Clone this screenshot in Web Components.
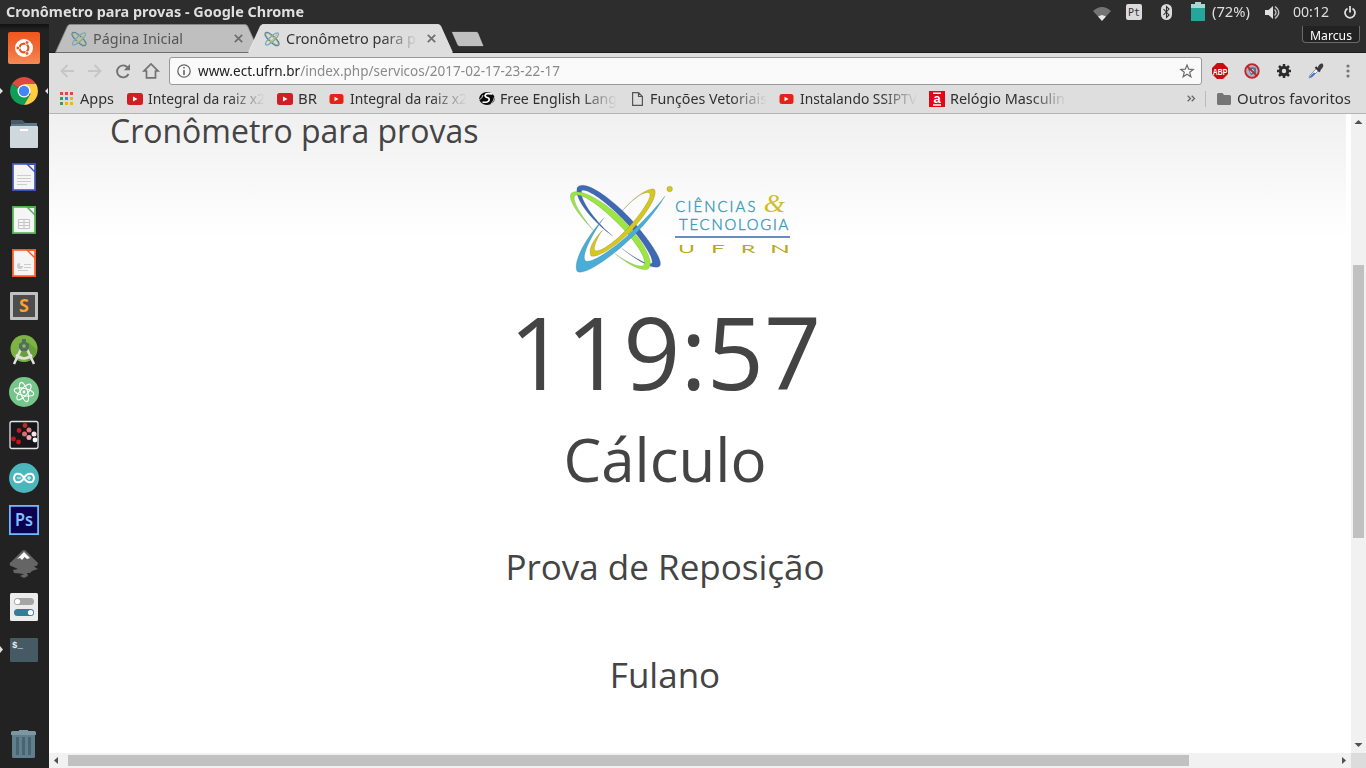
<!DOCTYPE html>
<html lang="pt-BR">
<head>
<meta charset="utf-8">
<title>Cronômetro para provas - Google Chrome</title>
<style>
html,body{margin:0;height:100%;overflow:hidden;background:#2d2d2d}
body{font-family:"Noto Sans","Open Sans",sans-serif}
</style>
</head>
<body>
<desk-top></desk-top>
<script>
const ICONS = {
  wifi: '<path d="M0 5Q9-3 18 5L13 10.500Q9 8 5 10.500Z" fill="#747474"/><path d="M5 10.500Q9 7.500 13 10.500L9 15Z" fill="#e8e8e8"/>',
  bt: '<rect width="11" height="16" rx="5.500" fill="#dbdbdb"/><path d="M2.500 5L8 11L5.500 13.500V2.500L8 5L2.500 11" fill="none" stroke="#2d2d2d" stroke-width="1.100"/>',
  battery: '<path d="M4 0h6v2h4v17H0V2h4Z" fill="#a7d8d4"/><path d="M0 6h14v13H0Z" fill="#26a69a"/>',
  sound: '<path d="M0 5h3.500L8 1v13L3.500 10H0Z" fill="#dfdfdf"/><path d="M9.500 4.500q3 3 0 6M10 1.500q7.500 6 0 12" fill="none" stroke="#bcbcbc" stroke-width="1.400"/>',
  power: '<path d="M3.500 2.500a5 5 0 1 0 5 0M6 0v6.500" fill="none" stroke="#dfdfdf" stroke-width="1.800"/>',
  fav: '<g fill="none"><ellipse cx="8" cy="8" rx="9" ry="3" transform="rotate(43 8 8)" stroke="#5d7f9a" stroke-width="1.300"/><ellipse cx="8" cy="8" rx="8" ry="2" transform="rotate(43 8 8)" stroke="#a6bd8c" stroke-width="1"/><ellipse cx="8" cy="8" rx="8.500" ry="2.400" transform="rotate(-43 8 8)" stroke="#76a9bd" stroke-width="1.300"/><path d="M5 11Q10 9 13 3" stroke="#cdc35c" stroke-width="1.200"/></g>',
  close: '<path d="M.8.800L8.200 8.200M8.200.800L.8 8.200" stroke="#6e6e6e" stroke-width="1.700"/>',
  back: '<path d="M14 7H1.500M7.500 1L1.500 7L7.500 13" fill="none" stroke="#c6c6c6" stroke-width="1.800"/>',
  fwd: '<path d="M0 7H12.500M6.500 1L12.500 7L6.500 13" fill="none" stroke="#c6c6c6" stroke-width="1.800"/>',
  reload: '<path d="M12.500 10A6 6 0 1 1 11.500 3.300" fill="none" stroke="#727272" stroke-width="1.900"/><path d="M14 0V6.200H7.800Z" fill="#727272"/>',
  home: '<path d="M3.500 8V14.800H12.500V8H15L8 1L1 8Z" fill="none" stroke="#727272" stroke-width="1.700"/>',
  info: '<circle cx="7" cy="7" r="6.200" fill="none" stroke="#666" stroke-width="1.300"/><path d="M7 6v5M7 3v1.600" stroke="#666" stroke-width="1.600"/>',
  star: '<path d="M7 1L8.700 5.200L13.200 5.500L9.700 8.300L10.900 12.800L7 10.300L3.100 12.800L4.300 8.300L.8 5.500L5.300 5.200Z" fill="none" stroke="#6b6b6b" stroke-width="1.200"/>',
  abp: '<path d="M5 0h6l5 5v6l-5 5H5L0 11V5Z" fill="#c90c0f"/><text x="8" y="11.500" text-anchor="middle" textLength="14.500" lengthAdjust="spacingAndGlyphs" font-family="Liberation Sans" font-weight="700" font-size="9.500" fill="#fff">ABP</text>',
  block: '<circle cx="8" cy="8" r="5.500" fill="#a9b4c5"/><path d="M4 6l3 6 5-2V5L8 4Z" fill="#4c78a8"/><circle cx="8" cy="8" r="2" fill="#d5e4f0"/><circle cx="8" cy="8" r="6.700" fill="none" stroke="#c2262c" stroke-width="2"/><path d="M3.500 3.500L12.500 12.500" stroke="#c2262c" stroke-width="2"/>',
  gear: '<circle cx="7" cy="7" r="3.700" fill="none" stroke="#2b2b2b" stroke-width="3"/><path d="M7 0v3M7 11v3M0 7h3M11 7h3M2 2l2 2M10 10l2 2M12 2l-2 2M4 10l-2 2" stroke="#2b2b2b" stroke-width="2.500"/>',
  picker: '<path d="M1 15L2 12L9 5L11 7L4 14Z" fill="#f1f4f7" stroke="#7e8791" stroke-width=".8"/><path d="M1.500 14.500L3 12L6 9.500L7.500 10.500L4 14Z" fill="#4472e0"/><path d="M7.500 4L12 8.500" stroke="#303030" stroke-width="2.200"/><path d="M9.500 5.500Q11 0 14.500 .5Q17 3 12 7.500Z" fill="#3c3c42"/>',
  menu: '<g fill="#777"><circle cx="2" cy="2" r="1.600"/><circle cx="2" cy="7" r="1.600"/><circle cx="2" cy="12" r="1.600"/></g>',
  apps: '<path d="M0 0h3v3H0Zm5 0h3v3H5Zm5 0h3v3h-3Z" fill="#ef4136"/><path d="M0 5h3v3H0ZM0 10h3v3H0Z" fill="#2ba35a"/><path d="M5 5h3v3H5Z" fill="#2f8de4"/><path d="M10 5h3v3h-3ZM5 10h3v3H5Zm5 0h3v3h-3Z" fill="#f5b400"/>',
  yt: '<rect width="16" height="12" rx="2.500" fill="#cf1f24"/><path d="M6 3.500v5l4.500-2.500Z" fill="#fff"/>',
  yt2: '<rect x=".5" y="1" width="14" height="10" rx="2.500" fill="#e62117"/><path d="M5.500 3.800v4.400l4-2.200Z" fill="#fff"/>',
  globe: '<ellipse cx="8" cy="6.500" rx="7.800" ry="6.500" fill="#0b0b0b"/><path d="M13.500 2Q6.500 .5 6 3.800Q6.500 5.500 9.500 6Q11.500 8.500 8 10Q5.500 10.500 3.500 10" fill="none" stroke="#fff" stroke-width="1.700"/><path d="M.5 7.500Q3 7 4 3M12 12Q15 9 15.500 5" fill="none" stroke="#fff" stroke-width=".8"/>',
  page: '<path d="M.6.600H6.500L10.400 4.500V13.400H.6ZM6.500.600V4.500H10.400" fill="none" stroke="#555" stroke-width="1.200"/>',
  amer: '<rect width="16" height="16" fill="#e3051b"/><path d="M4 1.500h8v1.600H4ZM4 13.300h8v1.400H4Z" fill="#fff"/><text x="8" y="12" text-anchor="middle" font-family="Liberation Sans" font-weight="700" font-size="13" fill="#fff">a</text>',
  folder: '<path d="M0 1.500Q0 0 1.500 0H5.500L7 2H12.500Q14 2 14 3.500V10.500Q14 12 12.500 12H1.500Q0 12 0 10.500Z" fill="#757575"/>',
  more: '<path d="M.7.700L3.500 3.500L.7 6.300M4.700.700L7.500 3.500L4.700 6.300" fill="none" stroke="#666" stroke-width="1.300"/>'
};
const APPS = [
  '<defs><linearGradient id="u" x2="0" y2="1"><stop stop-color="#f0561d"/><stop offset=".5" stop-color="#f06a34"/><stop offset="1" stop-color="#f58a57"/></linearGradient></defs><rect x="8" y="5" width="32" height="32" rx="2" fill="url(#u)"/><circle cx="24" cy="21" r="9" fill="#fff"/><circle cx="24" cy="21" r="4.400" fill="none" stroke="#e95420" stroke-width="2.200"/><path d="M24 21L18 21M24 21L27 16M24 21L27 26" stroke="#fff" stroke-width="1"/><g fill="#e95420" stroke="#fff" stroke-width=".7"><circle cx="17.800" cy="21" r="1.800"/><circle cx="27" cy="15.500" r="1.800"/><circle cx="27" cy="26.500" r="1.800"/></g>',
  '<path d="M24 21L11.900 14A14 14 0 0 1 36.100 14Z" fill="#db4c3f"/><path d="M24 21L11.900 14A14 14 0 0 0 24 35L30 25Z" fill="#0f9d58"/><path d="M24 14H36.100A14 14 0 0 1 24 35L30.500 24Z" fill="#ffcd40"/><circle cx="24" cy="21" r="6.500" fill="#fff"/><circle cx="24" cy="21" r="5.200" fill="#4386f5"/><path d="M0 18L3 21L0 24ZM48 18L45 21L48 24Z" fill="#e0e0e0"/>',
  '<path d="M11 7h11l3 3h12v8H11Z" fill="#5b7a8a"/><path d="M11 7h11l3 4H11Z" fill="#455a66"/><rect x="10" y="13" width="28" height="22" rx="1" fill="#cfd8dc"/><path d="M20 16h8v2h-8Z" fill="#fff"/>',
  doc('#3f51b5','<path d="M17 19.500h14M17 22.500h14M17 25.500h14M17 28.500h10" stroke="#ccc"/>'),
  doc('#4caf50','<path d="M18.500 20.500h11v9h-11ZM18.500 23.500h11M18.500 26.500h11M24 20.500v9" fill="none" stroke="#c5c5c5"/>'),
  doc('#ff5722','<path d="M24 22.500h7M24 25.500h7M18 28.500h10" stroke="#ccc"/><path d="M20 21A3 3 0 1 0 23 24H20Z" fill="#ccc"/>'),
  '<rect x="10" y="7" width="28" height="28" rx="1" fill="#c1c1c1"/><rect x="13" y="10" width="22" height="22" fill="#4d4d4d"/><text x="24" y="27.300" text-anchor="middle" font-family="Noto Sans" font-weight="700" font-size="18" fill="#ff9f2e">S</text>',
  '<circle cx="24" cy="20.500" r="13.500" fill="#7cb342"/><path d="M28 14L37 22Q36 30 28 33L18 24Z" fill="#689f38"/><path d="M22 19L14 36M26 19L34 36M16 27Q24 34 32 27" fill="none" stroke="#e2e2e2" stroke-width="2.500"/><path d="M22 11h4v3l3 2v4l-2 3h-6l-2-3v-4l3-2Z" fill="#546e64"/><circle cx="24" cy="18" r="1.800" fill="#8bc34a"/>',
  '<circle cx="24" cy="21" r="15" fill="#76c58a"/><g fill="none" stroke="#fff" stroke-width="1.100"><ellipse cx="24" cy="21" rx="10" ry="3.600" transform="rotate(12 24 21)"/><ellipse cx="24" cy="21" rx="10" ry="3.600" transform="rotate(72 24 21)"/><ellipse cx="24" cy="21" rx="10" ry="3.600" transform="rotate(132 24 21)"/></g><circle cx="24" cy="21" r="1.400" fill="#fff"/>',
  '<rect x="10" y="7.500" width="28" height="27" rx="2" fill="#17171b" stroke="#e5e5e5" stroke-width="1.300"/><g><circle cx="25" cy="11.500" r="2.400" fill="#b83123"/><circle cx="19" cy="16.500" r="2.400" fill="#c11d22"/><circle cx="13.500" cy="25" r="2.400" fill="#c4161c"/><circle cx="18.500" cy="28" r="2.400" fill="#c4161c"/><circle cx="29" cy="16" r="2.500" fill="#e07a80"/><circle cx="24.500" cy="20" r="2.500" fill="#df6b72"/><circle cx="29" cy="23.500" r="2.500" fill="#f0aab0"/><circle cx="34" cy="20" r="2.500" fill="#f8e4e6"/><circle cx="35" cy="26" r="2.400" fill="#fff"/></g>',
  '<circle cx="24" cy="21" r="15" fill="#4db6bd"/><path d="M24 21C21 15.500 14.500 15 14 21C14.500 27 21 26.500 24 21C27 15.500 33.500 15 34 21C33.500 27 27 26.500 24 21Z" fill="none" stroke="#fff" stroke-width="2"/><path d="M17 21h4M27 21h4M29 19v4" stroke="#fff"/>',
  '<rect x="9.900" y="5.900" width="28.200" height="28.200" fill="#0b0350" stroke="#70b7ff" stroke-width="1.800"/><text x="24" y="25.500" text-anchor="middle" textLength="18" lengthAdjust="spacingAndGlyphs" font-family="Noto Sans" font-weight="600" font-size="17" fill="#80bfff">Ps</text>',
  '<path d="M22 8Q24 6 26 8L38 20Q38 23 34 23.500L38 26L32 28L30 30H27L28 33L24 35L20 33L24 31L14 30L13 27L18 26L10 22.500Q9 20 11 19Z" fill="#656565"/><path d="M24 9L30 15L27 16L24.500 14L22 17L20 15L17 16Z" fill="#fff"/>',
  '<rect x="10" y="7" width="28" height="28" rx="1.500" fill="#ececec"/><rect x="14" y="12" width="20" height="7" rx="3.500" fill="#a5a5a5"/><circle cx="17.500" cy="15.500" r="2.600" fill="#fff"/><rect x="14" y="23" width="20" height="7" rx="3.500" fill="#357a99"/><circle cx="30.500" cy="26.500" r="2.600" fill="#fff"/>',
  '<rect x="10" y="9" width="28" height="24" rx="1" fill="#455a64"/><text x="12" y="19" font-family="Liberation Mono" font-weight="700" font-size="9" fill="#eee">$_</text><path d="M0 17L3 20.500L0 24Z" fill="#e0e0e0"/>'
];
const TRASH = '<rect x="12" y="10" width="23" height="25" rx="1.500" fill="#5f7f8d"/><path d="M17.500 14v18M23.500 14v18M29.500 14v18" stroke="#486472" stroke-width="3"/><path d="M11 9.500Q11 8 12.500 8H19V7H28V8H34.500Q36 8 36 9.500V12H11Z" fill="#7d96a1"/>';
function doc(c, inner) {
  return '<path d="M12.900 7.900H35.100V34.100H12.900Z" fill="#f5f5f5" stroke="' + c + '" stroke-width="1.800"/><path d="M25 7H36V18Z" fill="' + c + '"/><path d="M29 9H34.200V14.200Z" fill="#f5f5f5"/>' + inner;
}
function define(name, css, html, after) {
  customElements.define(name, class extends HTMLElement {
    connectedCallback() {
      if (this.shadowRoot) return;
      const t = document.createElement('template');
      t.innerHTML = '<style>' + css + '</style>' + (typeof html === 'function' ? html(this) : html);
      this.attachShadow({ mode: 'open' }).append(t.content.cloneNode(true));
      if (after) after(this, this.shadowRoot);
    }
  });
}

/* Icon from the set; w and h are its box. */
define('x-icon', ':host{display:block;flex:none}svg{display:block;overflow:visible}',
  e => `<svg width="${e.getAttribute('w')}" height="${e.getAttribute('h')}">${ICONS[e.getAttribute('name')]}</svg>`);

/* Single-line label condensed to a width; box sets a wider or narrower box whose end fades out. */
define('fit-label', ':host{display:block;flex:none;white-space:nowrap}:host([box]){-webkit-mask:linear-gradient(90deg,#000 calc(100% - 36px),transparent)}span{display:inline-block;transform-origin:0 50%}',
  '<span><slot></slot></span>', (e, r) => {
    const w = +e.getAttribute('w'), s = r.querySelector('span');
    s.style.transform = `scaleX(${w / s.getBoundingClientRect().width})`;
    e.style.width = (e.getAttribute('box') || w + 1) + 'px';
  });

define('top-panel', ':host{display:flex;align-items:center;height:24px;background:#2d2d2d;color:#dfdfdf;font-size:14px;line-height:24px;box-sizing:border-box;padding-left:6px}.t{font-weight:700;font-size:14px}.s{flex:1}.pt{width:16px;height:16px;border-radius:2px;background:#dbdbdb;color:#333;font:10px/17px "DejaVu Sans Mono",monospace;text-align:center;margin:0 19px 0 16px}', `
  <fit-label class="t" w="298">Cronômetro para provas - Google Chrome</fit-label><div class="s"></div>
  <x-icon name="wifi" w="17" h="13"></x-icon><div class="pt">Pt</div>
  <x-icon name="bt" w="11" h="16"></x-icon><x-icon name="battery" w="14" h="19" style="margin:-1px 7px 0 19px"></x-icon>
  <fit-label w="38">(72%)</fit-label><x-icon name="sound" w="15" h="15" style="margin:0 13px 0 14px"></x-icon>
  <fit-label w="36">00:12</fit-label><x-icon name="power" w="12" h="12" style="margin:0 10px 0 14px"></x-icon>`);

define('app-launcher', ':host{display:flex;flex-direction:column;box-sizing:border-box;width:49px;background:linear-gradient(#111,#222 6px);padding-top:3px}svg{display:block;flex:none}.g{flex:1}.trash{margin-bottom:2px}',
  () => APPS.map(a => `<svg width="49" height="43">${a}</svg>`).join('') + `<div class="g"></div><svg class="trash" width="49" height="43">${TRASH}</svg>`);

define('browser-tab', ':host{display:grid;width:207px;height:29px;flex:none;color:#555;font-size:14px;line-height:20px}:host([active]){margin-left:-14px;color:#333;z-index:1}svg,.c{grid-area:1/1}svg{overflow:visible}.c{display:flex;align-items:center;padding:0 19px 0 16px;gap:6px}.c>:last-child{margin-left:auto}',
  e => { const a = e.hasAttribute('active'); return `<svg width="207" height="29"><path d="M.5 28.500L12.500 2Q13.500 .5 15 .5H190Q192 .5 192.800 2.500L204.500 28.500" fill="${a ? '#dedede' : '#bfbfbf'}" stroke="${a ? '#eee' : '#8a8a8a'}" stroke-width=".8"/>${a ? '<path d="M1 29H204" stroke="#dedede" stroke-width="2"/>' : ''}</svg><div class="c"><x-icon name="fav" w="16" h="16"></x-icon><slot></slot><x-icon name="close" w="9" h="9"></x-icon></div>`; });

define('tab-strip', ':host{display:flex;height:29px;background:#2d2d2d;padding:0 6px 0 6px;box-shadow:inset 0 -1px #1c1c1c}.n{flex:none;margin:7px 0 0 -4px}.u{margin-left:auto;align-self:flex-start;margin-top:2px;box-sizing:border-box;width:58px;height:17px;border:1px solid #6a6a6a;border-top:0;border-radius:0 0 4px 4px;background:#222;color:#fff;font-size:12.500px;line-height:19px;padding-left:7px}', `
  <browser-tab><fit-label w="90">Página Inicial</fit-label></browser-tab>
  <browser-tab active><fit-label w="130" box="132">Cronômetro para p</fit-label></browser-tab>
  <svg class="n" width="34" height="16"><path d="M1 .5H25Q27 .5 27.500 2L33 15.500H8.500Q7 15.500 6 13.500L.5 1Z" fill="#bfbfbf" stroke="#171717" stroke-width=".6"/></svg>
  <div class="u"><fit-label w="42">Marcus</fit-label></div>`);

define('nav-bar', ':host{display:flex;align-items:center;height:32px;padding:0 16px 0 11px;background:#dedede;box-sizing:border-box}.o{flex:1;display:flex;align-items:center;box-sizing:border-box;height:28px;margin:4px 10px 0 10px;border:1px solid #999;border-radius:3px;background:#fafafa;padding:0 7px;font-size:14px;line-height:24px;color:#8a8a8a}.o x-icon:last-child{margin-left:auto}b{font-weight:400;color:#222}.i{margin-top:4px}', `
  <x-icon class="i" name="back" w="14" h="14"></x-icon><x-icon class="i" name="fwd" w="14" h="14" style="margin-left:14px"></x-icon>
  <x-icon class="i" name="reload" w="14" h="14" style="margin-left:14px"></x-icon><x-icon class="i" name="home" w="16" h="16" style="margin-left:13px"></x-icon>
  <div class="o"><x-icon name="info" w="14" h="14" style="margin-right:7px"></x-icon><fit-label w="362"><b>www.ect.ufrn.br</b>/index.php/servicos/2017-02-17-23-22-17</fit-label><x-icon name="star" w="14" h="14"></x-icon></div>
  <x-icon class="i" name="abp" w="16" h="16"></x-icon><x-icon class="i" name="block" w="16" h="16" style="margin-left:16px"></x-icon>
  <x-icon class="i" name="gear" w="14" h="14" style="margin-left:17px"></x-icon><x-icon class="i" name="picker" w="16" h="16" style="margin-left:17px"></x-icon>
  <x-icon class="i" name="menu" w="4" h="14" style="margin-left:22px"></x-icon>`);

define('bookmark-item', ':host{display:flex;align-items:center;flex:none}x-icon{margin-right:5px}',
  e => `<x-icon name="${e.getAttribute('icon')}" w="${e.getAttribute('iw')}" h="${e.getAttribute('ih')}"></x-icon><slot></slot>`);

define('bookmarks-bar', ':host{display:flex;align-items:center;height:29px;box-sizing:border-box;background:#dedede;border-bottom:1px solid #b4b4b4;padding:0 14px 1px 11px;font-size:14px;line-height:22px;color:#303030}.s{width:1px;height:16px;background:#bbb;margin:0 11px 0 10px}', `
  <bookmark-item icon="apps" iw="15" ih="13"><fit-label w="34">Apps</fit-label></bookmark-item>
  <bookmark-item icon="yt" iw="16" ih="12" style="margin-left:12px"><fit-label w="117" box="117">Integral da raiz x2</fit-label></bookmark-item>
  <bookmark-item icon="yt" iw="16" ih="12" style="margin-left:12px"><fit-label w="19">BR</fit-label></bookmark-item>
  <bookmark-item icon="yt2" iw="16" ih="12" style="margin-left:11px"><fit-label w="117" box="117">Integral da raiz x2</fit-label></bookmark-item>
  <bookmark-item icon="globe" iw="16" ih="13" style="margin-left:12px"><fit-label w="117" box="117">Free English Lang</fit-label></bookmark-item>
  <bookmark-item icon="page" iw="13" ih="14" style="margin-left:15px"><fit-label w="117" box="117">Funções Vetoriais</fit-label></bookmark-item>
  <bookmark-item icon="yt2" iw="16" ih="12" style="margin-left:12px"><fit-label w="117" box="117">Instalando SSIPTV</fit-label></bookmark-item>
  <bookmark-item icon="amer" iw="16" ih="16" style="margin-left:12px"><fit-label w="115" box="117">Relógio Masculin</fit-label></bookmark-item>
  <x-icon name="more" w="8" h="7" style="margin-left:auto"></x-icon><div class="s"></div>
  <bookmark-item icon="folder" iw="15" ih="12"><fit-label w="114">Outros favoritos</fit-label></bookmark-item>`);

define('school-logo', ':host{display:block;width:240px;height:110px}svg{display:block}', `
  <svg width="240" height="110" viewBox="0 0 720 330">
  <g stroke="#405040" stroke-opacity=".35" stroke-width="1.500">
  <path fill="#3f69b5" d="M158 183C100 140 40 72 52 37C75 10 160 75 215 135C265 190 310 255 300 272C285 290 230 255 185 220C225 250 268 274 276 264C281 245 236 180 196 140C148 88 82 38 65 47C55 70 110 145 158 183Z"/>
  <path fill="#9be643" d="M102 168C60 125 22 75 33 56C52 35 125 73 183 128C248 193 287 264 265 281C245 292 200 265 165 236C200 262 243 281 252 270C262 250 222 192 168 140C115 87 58 50 44 62C35 80 70 130 102 168Z"/>
  <path fill="#d5c620" d="M185 110C215 72 262 38 282 42C299 58 254 123 215 166C170 214 112 250 93 243C82 225 102 190 128 165C110 190 98 222 106 227C122 232 165 200 203 160C242 118 280 62 268 54C255 45 215 75 185 110Z"/>
  <path fill="#49add8" d="M315 63C288 110 243 163 205 197C155 245 72 305 51 289C38 262 75 190 132 128C95 180 63 242 76 257C90 268 155 226 205 180C245 143 287 100 315 63Z"/>
  <circle cx="329" cy="42" r="8.500" fill="#d5c620"/></g>
  <g font-family="Lato, sans-serif" fill="#3f9cba" stroke="#3f9cba" stroke-width="1.300" font-size="44.500" font-weight="300">
  <text x="346" y="110" textLength="240">CIÊNCIAS</text><text x="357" y="166" textLength="328">TECNOLOGIA</text></g>
  <path d="M345 186H690" stroke="#3b66ad" stroke-width="4.500"/>
  <text x="611" y="110" textLength="64" lengthAdjust="spacingAndGlyphs" font-family="Liberation Serif" font-style="italic" font-size="78" fill="#d1bf22">&amp;</text>
  <g font-family="Lato, sans-serif" fill="#b8aa1c" font-size="37">
  <text x="354" y="234" textLength="51" lengthAdjust="spacingAndGlyphs">U</text><text x="453" y="234" textLength="41" lengthAdjust="spacingAndGlyphs">F</text><text x="542" y="234" textLength="44" lengthAdjust="spacingAndGlyphs">R</text><text x="630" y="234" textLength="60" lengthAdjust="spacingAndGlyphs">N</text></g>
  </svg>`);

define('exam-timer', ':host{display:flex;flex-direction:column;align-items:center;width:1110px;color:#444;font-family:"Open Sans",sans-serif}h1,p{margin:0;font-weight:400;white-space:nowrap}h1{align-self:flex-start;font-size:32px;line-height:34px}school-logo{margin:27px 0 0 30px}.t{font-size:100px;line-height:110px;margin-top:11px}.s{font-size:60px;line-height:80px;margin-top:13px}.p{font-size:35px;line-height:48px;margin-top:44px}.n{margin-top:60px}', `
  <h1><slot name="title"></slot></h1><school-logo></school-logo>
  <p class="t"><slot name="time"></slot></p><p class="s"><slot name="subject"></slot></p>
  <p class="p"><slot name="kind"></slot></p><p class="p n"><slot name="person"></slot></p>`);

define('scroll-bar', ':host{display:flex;background:#f1f1f1;align-items:center}:host([vertical]){flex-direction:column}svg{flex:none;display:block}.track{flex:1;display:flex;align-self:stretch}:host([vertical]) .track{flex-direction:column}.thumb{background:#c1c1c1}', e => {
  const v = e.hasAttribute('vertical'), o = +e.getAttribute('offset'), l = +e.getAttribute('length');
  const arrow = (d) => `<svg width="15" height="15"><path d="${d}" fill="#505050"/></svg>`;
  return arrow(v ? 'M3.500 10H11.500L7.500 6Z' : 'M9 4V11L5 7.500Z') +
    `<div class="track"><div class="thumb" style="${v ? `margin:${o}px 2px 0 2px;height:${l}px` : `margin:2px 0 2px ${o}px;width:${l}px`}"></div></div>` +
    arrow(v ? 'M3.500 5H11.500L7.500 9Z' : 'M6 4V11L10 7.500Z');
});

define('page-view', ':host{display:grid;grid-template:minmax(0,1fr) 15px/minmax(0,1fr) 15px;min-height:0;background:#fff}.page{overflow:hidden;background:linear-gradient(#f0f0f0,#fff 125px);border-right:5px solid #fff;padding-left:61px}.corner{background:#dcdcdc}', `
  <div class="page"><exam-timer><span slot="title">Cronômetro para provas</span><span slot="time">119:57</span><span slot="subject">Cálculo</span><span slot="kind">Prova de Reposição</span><span slot="person">Fulano</span></exam-timer></div>
  <scroll-bar vertical offset="136" length="273"></scroll-bar><scroll-bar offset="4" length="1121"></scroll-bar><div class="corner"></div>`);

define('chrome-window', ':host{display:grid;grid-template-rows:29px 32px 29px minmax(0,1fr);min-width:0;min-height:0}', '<tab-strip></tab-strip><nav-bar></nav-bar><bookmarks-bar></bookmarks-bar><page-view></page-view>');

define('desk-top', ':host{display:grid;grid-template:24px minmax(0,1fr)/49px minmax(0,1fr);width:1366px;height:768px;overflow:hidden}top-panel{grid-column:1/3}', '<top-panel></top-panel><app-launcher></app-launcher><chrome-window></chrome-window>');
</script>
</body>
</html>
